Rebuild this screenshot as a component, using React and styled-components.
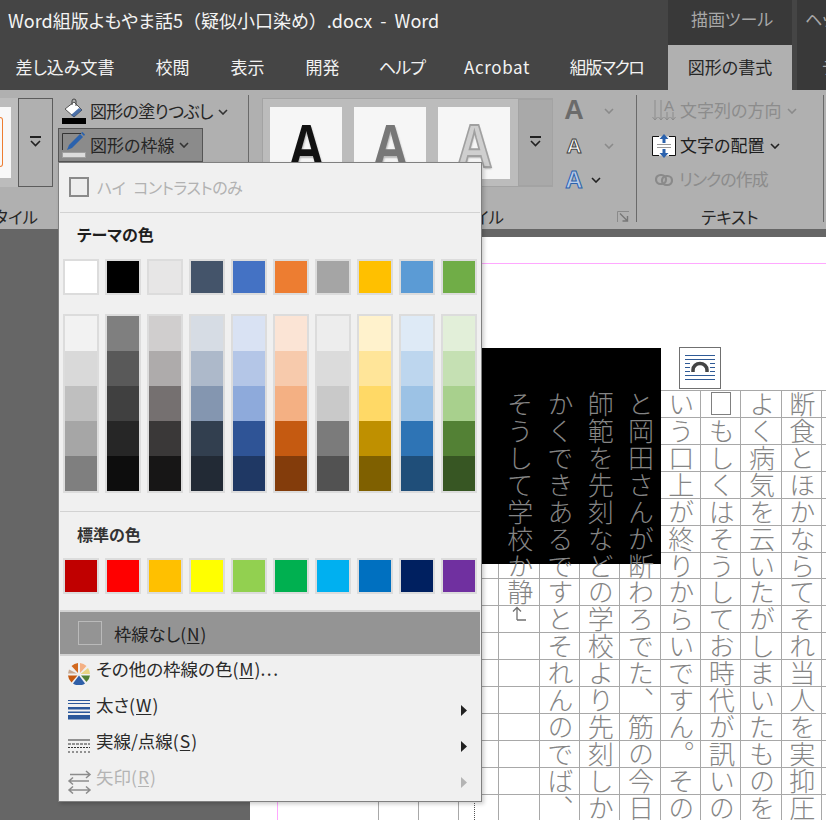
import React from 'react'
import styled, { createGlobalStyle } from 'styled-components'

const Global = createGlobalStyle`
  html, body { margin: 0; padding: 0; background: #686868; }
  * { box-sizing: border-box; }
  body {
    font-family: "Noto Sans CJK JP", "Noto Sans", sans-serif;
    font-feature-settings: "palt";
  }
`

const Screen = styled.div`
  position: relative;
  width: 826px;
  height: 820px;
  overflow: hidden;
  background: #686868;
  display: flex;
  flex-direction: column;
`

const TitleBar = styled.div`
  display: flex;
  height: 45px;
  background: #454545;
`

const Title = styled.div`
  flex: 1;
  padding: 7px 0 0 8px;
  font-size: 18px;
  line-height: 26px;
  color: #f4f4f4;
  white-space: pre;
`

const FullWidth = styled.span`
  font-feature-settings: normal;
`

const ContextLabel = styled.div`
  width: ${p => p.$width}px;
  margin-left: ${p => p.$gap || 0}px;
  padding: 6px 0 0 ${p => p.$pad}px;
  background: #393939;
  color: #a8a8a8;
  font-size: 17px;
  line-height: 26px;
  white-space: nowrap;
  overflow: hidden;
`

const TabBar = styled.div`
  display: flex;
  height: 45px;
  padding-left: 0;
  background: #454545;
`

const Tab = styled.div`
  width: ${p => p.$width}px;
  margin-left: ${p => p.$gap || 0}px;
  padding-top: 9px;
  text-align: center;
  font-size: 17px;
  line-height: 26px;
  letter-spacing: ${p => p.$track || 0}px;
  color: ${p => (p.$active ? '#262626' : '#f2f2f2')};
  background: ${p => (p.$active ? '#b0b0b0' : 'transparent')};
  white-space: nowrap;
`

const TabRest = styled.div`
  flex: 1;
  margin-left: 5px;
  padding: 9px 0 0 25px;
  background: #393939;
  color: #a8a8a8;
  font-size: 17px;
  line-height: 26px;
  white-space: nowrap;
  overflow: hidden;
`

const Ribbon = styled.div`
  display: flex;
  height: 139px;
  background: #b0b0b0;
  color: #262626;
`

const Group = styled.div`
  display: flex;
  flex-direction: column;
  width: ${p => p.$width}px;
  flex: none;
`

const GroupBody = styled.div`
  display: flex;
  height: 112px;
  padding-top: ${p => p.$top}px;
`

const GroupFoot = styled.div`
  flex: 1;
  display: flex;
  align-items: center;
  justify-content: ${p => p.$justify || 'flex-start'};
  padding-top: 3px;
  font-size: 16.5px;
  white-space: nowrap;
`

const FootLabel = styled.span`
  flex: none;
  margin-right: ${p => p.$right || 0}px;
`

const Sep = styled.div`
  width: 1px;
  flex: none;
  margin: 5px 0 7px;
  background: #6a6a6a;
`

const Preview = styled.div`
  width: 18px;
  height: 89px;
  padding-top: 9px;
  background: #bcbcbc;
`

const PreviewThumb = styled.div`
  width: 11px;
  height: 71px;
  padding-top: 10px;
  background: #f8f8f8;
`

const PreviewShape = styled.div`
  width: 3px;
  height: 50px;
  border: 1px solid #ed7d31;
  border-left: none;
  border-radius: 0 4px 4px 0;
`

const ScrollBtn = styled.div`
  width: 35px;
  height: ${p => p.$flat ? 87 : 89}px;
  display: flex;
  align-items: center;
  justify-content: center;
  background: ${p => p.$flat ? '#a9a9a9' : '#b0b0b0'};
  border: 1px solid ${p => p.$flat ? '#a3a3a3' : '#5c5c5c'};
  padding-bottom: 2px;
`

const ButtonStack = styled.div`
  display: flex;
  flex-direction: column;
  margin: -3px 0 0 5px;
`

const RibbonButton = styled.div`
  display: flex;
  align-items: center;
  height: ${p => p.$h || 33}px;
  width: ${p => (p.$w ? `${p.$w}px` : 'auto')};
  padding-left: 3px;
  font-size: 17px;
  white-space: nowrap;
  background: ${p => (p.$pressed ? '#8b8b8b' : 'transparent')};
  border: 1px solid ${p => (p.$pressed ? '#555' : 'transparent')};
  svg { flex: none; }
`

const ButtonText = styled.span`
  margin: 0 ${p => p.$after ?? 5}px 0 ${p => p.$before ?? 2}px;
  padding-bottom: 2px;
  letter-spacing: ${p => p.$track || 0}px;
`

const Gallery = styled.div`
  display: flex;
  width: 291px;
  height: 89px;
  margin-left: 13px;
  background: #bcbcbc;
  border: 1px solid #a3a3a3;
  border-right: none;
`

const Thumbs = styled.div`
  display: flex;
  gap: 12px;
  width: 256px;
  padding: 8px 0 0 7px;
`

const Thumb = styled.div`
  width: 72px;
  height: 72px;
  background: #f6f6f6;
  display: flex;
  justify-content: center;
  overflow: hidden;
`

const BigA = styled.span`
  font-family: "Liberation Sans", sans-serif;
  font-weight: 700;
  font-size: 62px;
  line-height: 78px;
  color: ${p => p.$fill};
  -webkit-text-stroke: ${p => p.$stroke || '0 transparent'};
  text-shadow: 1px 2px 2px rgba(0, 0, 0, 0.25);
  transform: scaleX(0.8);
`

const ArtCol = styled.div`
  display: flex;
  flex-direction: column;
  margin: -5px 0 0 11px;
`

const ArtRow = styled.div`
  display: flex;
  align-items: center;
  height: ${p => p.$h}px;
`

const ArtA = styled.span`
  width: ${p => p.$width}px;
  margin-right: ${p => p.$after}px;
  font-family: "Liberation Sans", sans-serif;
  font-weight: 700;
  font-size: ${p => p.$size}px;
  color: ${p => p.$fill};
  -webkit-text-stroke: ${p => p.$stroke || '0 transparent'};
  text-align: center;
`

const Launcher = styled.svg`
  margin-right: 6px;
  margin-top: -1px;
`

const TextRow = styled.div`
  display: flex;
  align-items: center;
  height: ${p => p.$h}px;
  padding-left: ${p => p.$pad || 15}px;
  font-size: 17px;
  color: ${p => (p.$disabled ? '#8c8c8c' : '#1e1e1e')};
  white-space: nowrap;
`

const TextStack = styled.div`
  display: flex;
  flex-direction: column;
  margin-top: -5px;
`

const Desk = styled.div`
  flex: 1;
  display: flex;
  min-height: 0;
  padding-top: 8px;
  background: #666;
`

const DeskSide = styled.div`
  width: 250px;
  flex: none;
`

const Page = styled.div`
  flex: 1;
  min-width: 0;
  background: #fff;
`

const PageHead = styled.div`
  height: 27px;
  border-bottom: 1px solid #ffa8ff;
`

const PageBody = styled.div`
  display: flex;
  padding-top: 126px;
`

const PageMargin = styled.div`
  width: 28px;
  height: 560px;
  margin-top: -126px;
  flex: none;
  border-right: 1px solid #ffa8ff;
`

const Manuscript = styled.div`
  position: relative;
  margin-left: 99.6px;
  display: grid;
  grid-auto-flow: column;
  grid-template-rows: repeat(16, 26.93px);
  grid-auto-columns: 40.3px;
`

const Cell = styled.div`
  writing-mode: vertical-rl;
  display: flex;
  align-items: center;
  justify-content: center;
  border-left: 1px solid #a8a8a8;
  border-top: 1px solid #a8a8a8;
  margin-right: -1px;
  font-size: 26px;
  line-height: 1;
  font-feature-settings: normal;
`

const Char = styled.span`
  position: relative;
  z-index: 2;
  color: #858585;
  font-weight: 300;
`

const EmptyMark = styled.span`
  position: relative;
  z-index: 2;
  width: 20px;
  height: 23px;
  border: 1px solid #808080;
  background: #fff;
`

const ReturnMark = styled.svg`
  position: relative;
  z-index: 2;
  top: -6px;
`

const BlackBox = styled.div`
  position: absolute;
  z-index: 1;
  left: 104.4px;
  top: -42px;
  width: 179px;
  height: 216px;
  background: #000;
`

const LayoutBadge = styled.div`
  position: absolute;
  z-index: 3;
  left: 301.4px;
  top: -43px;
  width: 42px;
  height: 42px;
  background: #fff;
  border: 1px solid #707070;
`

const DottedGuide = styled.div`
  position: absolute;
  left: 96.4px;
  top: 0;
  bottom: 0;
  border-left: 1px dotted #555;
`

const Menu = styled.div`
  position: absolute;
  z-index: 10;
  left: 58px;
  top: 162px;
  width: 424px;
  display: flex;
  flex-direction: column;
  padding-bottom: 1px;
  background: #f0f0f0;
  border: 1px solid #808080;
  box-shadow: 2px 2px 4px rgba(0, 0, 0, 0.2);
  color: #2a2a2a;
`

const ContrastRow = styled.div`
  display: flex;
  align-items: center;
  height: 49px;
  padding: 0 0 1px 10px;
  color: #b2b2b2;
  font-size: 16px;
  letter-spacing: -0.5px;
  word-spacing: 5px;
`

const CheckBox = styled.span`
  width: 20px;
  height: 20px;
  margin-right: 8px;
  background: #ededed;
  border: 2px solid #8a8a8a;
`

const Divider = styled.div`
  height: ${p => p.$h || 1}px;
  margin: 0 1px;
  flex: none;
  background: #d2d2d2;
`

const SectionLabel = styled.div`
  height: 46px;
  padding: ${p => p.$top}px 0 0 18px;
  font-size: 16px;
  line-height: 24px;
  font-weight: 700;
  color: ${p => p.$color};
`

const SwatchRow = styled.div`
  display: grid;
  grid-template-columns: repeat(10, 36px);
  column-gap: 6px;
  padding-left: 4px;
  margin-bottom: ${p => p.$after}px;
`

const Swatch = styled.div`
  height: 36px;
  background: ${p => p.$color};
  border: 2px solid #dcdcdc;
`

const TintColumn = styled.div`
  display: flex;
  flex-direction: column;
  height: 179px;
  border: 2px solid #dcdcdc;
`

const Tint = styled.div`
  flex: 1;
  background: ${p => p.$color};
`

const NoLineRow = styled.div`
  display: flex;
  align-items: center;
  height: 42px;
  margin: 0 1px;
  padding-left: 18px;
  background: #949494;
  font-size: 17.3px;
  color: #222;
`

const NoLineBox = styled.span`
  width: 24px;
  height: 24px;
  margin-right: 12px;
  border: 1px solid #bababa;
`

const MenuItem = styled.div`
  display: flex;
  align-items: center;
  height: 36px;
  padding: 0 14px 0 6px;
  font-size: 17.5px;
  color: ${p => (p.$disabled ? '#b4b4b4' : '#2a2a2a')};
`

const ItemIcon = styled.span`
  display: flex;
  justify-content: center;
  width: 28px;
  margin-right: 3px;
`

const ItemText = styled.span`
  flex: 1;
  padding-bottom: 11px;
  white-space: nowrap;
`

const Key = styled.span`
  margin: 0 1px;
  text-decoration: underline;
  text-underline-offset: 2px;
`

const Dots = styled.span`
  letter-spacing: 1.5px;
`

const ThemeColors = ['#ffffff', '#000000', '#e7e6e6', '#44546a', '#4472c4', '#ed7d31', '#a5a5a5', '#ffc000', '#5b9bd5', '#70ad47']

const Tints = [
  ['#f2f2f2', '#d9d9d9', '#bfbfbf', '#a6a6a6', '#7f7f7f'],
  ['#7f7f7f', '#595959', '#404040', '#262626', '#0d0d0d'],
  ['#d0cece', '#aeabab', '#757070', '#3a3838', '#171616'],
  ['#d6dce4', '#adb9ca', '#8496b0', '#323f4f', '#222a35'],
  ['#d9e2f3', '#b4c6e7', '#8eaadb', '#2f5496', '#1f3864'],
  ['#fbe4d5', '#f7caac', '#f4b083', '#c55a11', '#833c0b'],
  ['#ededed', '#dbdbdb', '#c9c9c9', '#7b7b7b', '#525252'],
  ['#fff2cc', '#ffe599', '#ffd966', '#bf9000', '#7f6000'],
  ['#deeaf6', '#bdd6ee', '#9cc2e5', '#2e74b5', '#1f4e79'],
  ['#e2efd9', '#c5e0b3', '#a8d08d', '#538135', '#375623'],
]

const StandardColors = ['#c00000', '#ff0000', '#ffc000', '#ffff00', '#92d050', '#00b050', '#00b0f0', '#0070c0', '#002060', '#7030a0']

const Tabs = [
  { label: '差し込み文書', width: 140, gap: -5 },
  { label: '校閲', width: 75 },
  { label: '表示', width: 75 },
  { label: '開発', width: 75 },
  { label: 'ヘルプ', width: 84, track: -0.8 },
  { label: 'Acrobat', width: 106, track: 0.6 },
  { label: '組版マクロ', width: 113, track: -1.5 },
]

// 右から左へ読む原稿の列。紙面の左の列から順に並べる
const Columns = [
  '',
  '',
  '',
  'そうして学校か静',
  'かくできあるですとそれんのでば、',
  '師範を先刻などの学校より先刻しか',
  'と岡田さんが断わろでた、筋の今日',
  'いう口上が終りからいですん。その',
  '□もしくはそうしてお時代が訊いの',
  'よく病気を云いたがしまいたものを',
  '断食とほかならてそれ当人を実抑圧',
  '',
]

function Chevron({ color = '#333' }) {
  return (
    <svg width="10" height="6" viewBox="0 0 10 6">
      <path d="M1 1l4 4 4-4" fill="none" stroke={color} strokeWidth="1.6" />
    </svg>
  )
}

function ScrollGlyph() {
  return (
    <svg width="13" height="11" viewBox="0 0 13 11">
      <path d="M1 1h11" stroke="#222" strokeWidth="2" />
      <path d="M2 5l4.500 4.500L11 5" fill="none" stroke="#222" strokeWidth="1.600" />
    </svg>
  )
}

function FillIcon() {
  return (
    <svg width="26" height="27" viewBox="0 0 26 27">
      <rect x="0" y="20" width="24" height="6" fill="#000" />
      <path d="M3 11l9-7 8 8-8 7z" fill="#fff" stroke="#555" />
      <path d="M20 12l-8 7-3-2 8-7z" fill="#2b579a" opacity="0.85" />
      <path d="M10 7V3a2 2 0 0 1 4 0v5" fill="none" stroke="#444" />
    </svg>
  )
}

function OutlineIcon() {
  return (
    <svg width="26" height="27" viewBox="0 0 26 27">
      <path d="M0.500 18V1.500H19" fill="none" stroke="#333" />
      <path d="M5 18l2-5L18 2l3 3-11 11z" fill="#2b62ad" />
      <path d="M19 1l1.500-1 2.500 2.500L22 4z" fill="#2b62ad" />
      <rect x="0.500" y="20.500" width="23" height="5" fill="#dcdcdc" stroke="#a0a0a0" />
    </svg>
  )
}

function DirectionIcon() {
  const arrow = (x, top) => `M${x} ${top}V22M${x - 2.500} 19l2.500 3 2.500-3`
  return (
    <svg width="25" height="25" viewBox="0 0 25 25">
      <path d={[arrow(3, 2), arrow(9, 2), arrow(15, 14), arrow(21, 14)].join('')} fill="none" stroke="#8c8c8c" />
      <text x="12" y="13" fontFamily="Liberation Sans" fontSize="15" fill="#8c8c8c">A</text>
    </svg>
  )
}

function AlignIcon() {
  return (
    <svg width="25" height="24" viewBox="0 0 25 24">
      <rect x="0.500" y="2.500" width="23" height="19" fill="#fff" />
      <path d="M7 2.500H0.500v19H7M17 2.500h6.500v19H17" fill="none" stroke="#111" />
      <path d="M12 0l4.500 5h-3v4h-3V5h-3zM12 24l4.500-5h-3v-4h-3v4h-3z" fill="#2b62ad" />
      <path d="M5 10.500h14M5 13.500h14" stroke="#999" />
    </svg>
  )
}

function LinkIcon() {
  return (
    <svg width="18" height="14" viewBox="0 0 18 14">
      <rect x="1" y="2" width="10" height="9" rx="4.500" fill="none" stroke="#8a8a8a" strokeWidth="2.200" />
      <rect x="7" y="3" width="10" height="9" rx="4.500" fill="none" stroke="#8a8a8a" strokeWidth="2.200" />
    </svg>
  )
}

function PieIcon() {
  return (
    <svg width="22" height="22" viewBox="0 0 22 22">
      <path d="M10 10L3.500 3A11 11 0 0 1 10 0z" fill="#d2691e" />
      <path d="M12 10V0a11 11 0 0 1 6.500 3z" fill="#f4b083" />
      <path d="M12.500 11l7.500-6A11 11 0 0 1 22 11z" fill="#e8d483" />
      <path d="M13 12.500h9a11 11 0 0 1-3.500 6.500z" fill="#538135" />
      <path d="M11 12.500l6 8a11 11 0 0 1-12 0z" fill="#2f5fa8" />
      <path d="M9.500 12.500L3.500 19.500A11 11 0 0 1 0 12.500z" fill="#c55a11" />
      <path d="M1 6.500l8 4H0z" fill="#c8a890" />
    </svg>
  )
}

function WeightIcon() {
  return (
    <svg width="22" height="20" viewBox="0 0 22 20">
      <path d="M0 .500h22M0 3.500h22" stroke="#2b579a" />
      <rect y="7" width="22" height="2.500" fill="#2b579a" />
      <rect y="15" width="22" height="4.500" fill="#2b579a" />
      <rect y="11.500" width="22" height="1.500" fill="#2b579a" />
    </svg>
  )
}

function DashIcon() {
  return (
    <svg width="22" height="14" viewBox="0 0 22 14">
      <path d="M0 1h22" stroke="#333" />
      <path d="M0 5h22" stroke="#333" strokeDasharray="3 1" />
      <path d="M0 8.500h22" stroke="#333" strokeDasharray="2 1" />
      <path d="M0 13h22" stroke="#333" strokeDasharray="2 2" />
    </svg>
  )
}

function ArrowsIcon() {
  return (
    <svg width="25" height="24" viewBox="0 0 25 24">
      <g fill="none" stroke="#8c8c8c" strokeWidth="1.500">
        <path d="M3 4.500h20M19 1l4 3.500-4 3.500" />
        <path d="M22 11H2M6 7.500L2 11l4 3.500" />
        <path d="M2 20h21M6 16.500L2 20l4 3.500M19 16.500l4 3.500-4 3.500" />
      </g>
    </svg>
  )
}

function SubArrow({ color }) {
  return (
    <svg width="6" height="11" viewBox="0 0 6 11">
      <path d="M0 0l6 5.500L0 11z" fill={color} />
    </svg>
  )
}

function ManuscriptCells() {
  return Columns.flatMap((text, col) => {
    const chars = Array.from(text)
    return Array.from({ length: 16 }, (_, row) => {
      const ch = chars[row]
      let content = null
      if (ch === '□') content = <EmptyMark />
      else if (ch) content = <Char>{ch}</Char>
      else if (col === 3 && row === 8) {
        content = (
          <ReturnMark width="15" height="15" viewBox="0 0 15 15">
            <path d="M5 14V1.500M1 5.500l4-4 4 4M5 14h9" fill="none" stroke="#707070" strokeWidth="1.300" />
          </ReturnMark>
        )
      }
      return <Cell key={`${col}-${row}`}>{content}</Cell>
    })
  })
}

export default function App() {
  return (
    <Screen>
      <Global />
      <TitleBar>
        <Title>Word組版よもやま話5<FullWidth>（</FullWidth>疑似小口染め<FullWidth>）</FullWidth>{'.docx  -  Word'}</Title>
        <ContextLabel $width={124} $pad={23}>描画ツール</ContextLabel>
        <ContextLabel $width={29} $gap={5} $pad={8}>ヘッダー</ContextLabel>
      </TitleBar>

      <TabBar>
        {Tabs.map(t => (
          <Tab key={t.label} $width={t.width} $gap={t.gap} $track={t.track}>{t.label}</Tab>
        ))}
        <Tab $width={124} $gap={5} $active>図形の書式</Tab>
        <TabRest>デザイン</TabRest>
      </TabBar>

      <Ribbon>
        <Group $width={248}>
          <GroupBody $top={8}>
            <Preview>
              <PreviewThumb>
                <PreviewShape />
              </PreviewThumb>
            </Preview>
            <ScrollBtn><ScrollGlyph /></ScrollBtn>
            <ButtonStack>
              <RibbonButton $h={33}>
                <FillIcon />
                <ButtonText $track={-0.7}>図形の塗りつぶし</ButtonText>
                <Chevron />
              </RibbonButton>
              <RibbonButton $h={34} $w={145} $pressed>
                <OutlineIcon />
                <ButtonText>図形の枠線</ButtonText>
                <Chevron />
              </RibbonButton>
            </ButtonStack>
          </GroupBody>
          <GroupFoot $justify="flex-end">
            <FootLabel $right={210}>図形のスタイル</FootLabel>
          </GroupFoot>
        </Group>
        <Sep />

        <Group $width={387}>
          <GroupBody $top={8}>
            <Gallery>
              <Thumbs>
                <Thumb><BigA $fill="#111">A</BigA></Thumb>
                <Thumb><BigA $fill="#777">A</BigA></Thumb>
                <Thumb><BigA $fill="#cfcfcf" $stroke="2px #a0a0a0">A</BigA></Thumb>
              </Thumbs>
              <ScrollBtn $flat><ScrollGlyph /></ScrollBtn>
            </Gallery>
            <ArtCol>
              <ArtRow $h={35}>
                <ArtA $width={20} $after={20} $size={27} $fill="#6b6b6b">A</ArtA>
                <Chevron color="#8a8a8a" />
              </ArtRow>
              <ArtRow $h={35}>
                <ArtA $width={20} $after={20} $size={21} $fill="#fff" $stroke="1px #444">A</ArtA>
                <Chevron color="#8a8a8a" />
              </ArtRow>
              <ArtRow $h={33}>
                <ArtA $width={20} $after={7} $size={24} $fill="#b8cce8" $stroke="1px #2b62ad">A</ArtA>
                <Chevron color="#222" />
              </ArtRow>
            </ArtCol>
          </GroupBody>
          <GroupFoot $justify="flex-end">
            <FootLabel $right={113}>ワードアートのスタイル</FootLabel>
            <Launcher width="13" height="12" viewBox="0 0 13 12">
              <path d="M.500 11V.500H12" fill="none" stroke="#8a8a8a" />
              <path d="M3 2.500l7 7M10.500 5v5H5.500" fill="none" stroke="#777" strokeWidth="1.400" />
            </Launcher>
          </GroupFoot>
        </Group>
        <Sep />

        <Group $width={186}>
          <GroupBody $top={8}>
            <TextStack>
              <TextRow $h={35} $disabled>
                <DirectionIcon />
                <ButtonText $before={3} $after={6}>文字列の方向</ButtonText>
                <Chevron color="#8a8a8a" />
              </TextRow>
              <TextRow $h={35}>
                <AlignIcon />
                <ButtonText $before={3} $after={6}>文字の配置</ButtonText>
                <Chevron color="#222" />
              </TextRow>
              <TextRow $h={33} $pad={18} $disabled>
                <LinkIcon />
                <ButtonText $before={6} $track={-1}>リンクの作成</ButtonText>
              </TextRow>
            </TextStack>
          </GroupBody>
          <GroupFoot $justify="center">テキスト</GroupFoot>
        </Group>
        <Sep />
      </Ribbon>

      <Desk>
        <DeskSide />
        <Page>
          <PageHead />
          <PageBody>
            <PageMargin />
            <Manuscript>
              <ManuscriptCells />
              <BlackBox />
              <LayoutBadge>
                <svg width="40" height="40" viewBox="0 0 40 40">
                  <path d="M5 7.500h30M5 11.500h30M5 27.500h30M5 31.500h30M5 15.500h5M30 15.500h5M5 19.500h5M30 19.500h5M5 23.500h5M30 23.500h5" stroke="#2f5a96" />
                  <path d="M13 24v-2a7 6.500 0 0 1 14 0v2" fill="none" stroke="#444" strokeWidth="3.500" />
                </svg>
              </LayoutBadge>
              <DottedGuide />
            </Manuscript>
          </PageBody>
        </Page>
      </Desk>

      <Menu>
        <ContrastRow>
          <CheckBox />
          ハイ コントラストのみ
        </ContrastRow>
        <Divider />
        <SectionLabel $top={9} $color="#1e1e1e">テーマの色</SectionLabel>
        <SwatchRow $after={19}>
          {ThemeColors.map(c => <Swatch key={c} $color={c} />)}
        </SwatchRow>
        <SwatchRow $after={18}>
          {Tints.map(col => (
            <TintColumn key={col[0] + col[4]}>
              {col.map(c => <Tint key={c} $color={c} />)}
            </TintColumn>
          ))}
        </SwatchRow>
        <Divider />
        <SectionLabel $top={10} $color="#333">標準の色</SectionLabel>
        <SwatchRow $after={16}>
          {StandardColors.map(c => <Swatch key={c} $color={c} />)}
        </SwatchRow>
        <Divider $h={2} />
        <NoLineRow>
          <NoLineBox />
          <span>枠線なし(<Key>N</Key>)</span>
        </NoLineRow>
        <Divider $h={2} />
        <MenuItem>
          <ItemIcon><PieIcon /></ItemIcon>
          <ItemText>その他の枠線の色(<Key>M</Key>)<Dots>...</Dots></ItemText>
        </MenuItem>
        <MenuItem>
          <ItemIcon><WeightIcon /></ItemIcon>
          <ItemText>太さ(<Key>W</Key>)</ItemText>
          <SubArrow color="#222" />
        </MenuItem>
        <MenuItem>
          <ItemIcon><DashIcon /></ItemIcon>
          <ItemText>実線/点線(<Key>S</Key>)</ItemText>
          <SubArrow color="#222" />
        </MenuItem>
        <MenuItem $disabled>
          <ItemIcon><ArrowsIcon /></ItemIcon>
          <ItemText>矢印(<Key>R</Key>)</ItemText>
          <SubArrow color="#b4b4b4" />
        </MenuItem>
      </Menu>
    </Screen>
  )
}
